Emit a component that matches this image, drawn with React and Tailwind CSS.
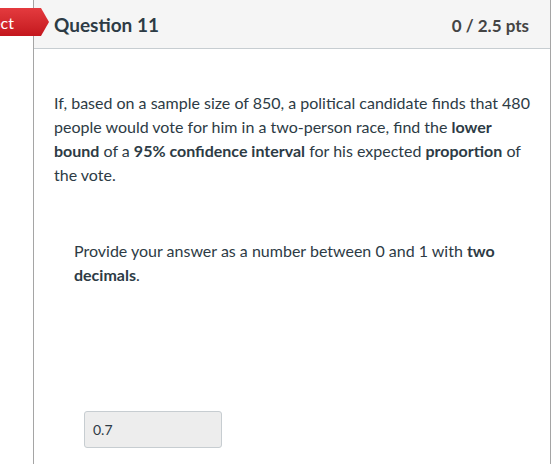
export default function App() {
  return (
    <div className="relative h-[464px] w-[553px] overflow-hidden bg-white font-['Lato','Liberation_Sans',sans-serif] text-[#2d3b45]">
      <div className="ml-[33px] h-full w-[518px] border-x border-[#a5a5a5]">
        <div className="flex h-[49px] items-center justify-between border-b border-[#c7cdd1] bg-[#f5f5f5] pl-[20px] pr-[21px] pt-[3px]">
          <h2 className="text-[19px] font-bold">Question 11</h2>
          <span className="text-[17px] font-bold text-[#444]">0 / 2.5 pts</span>
        </div>
        <div className="pl-[20px] pr-[16px] pt-[42px] text-[16px] leading-[24px]">
          <p>
            If, based on a sample size of 850, a political candidate finds that 480 people would vote for him in a two-person race, find the <strong>lower bound</strong> of a <strong>95% confidence interval</strong> for his expected <strong>proportion</strong> of the vote.
          </p>
          <p className="mt-[52px] pl-[20px]">
            Provide your answer as a number between 0 and 1 with <strong>two decimals</strong>.
          </p>
          <div className="ml-[30px] mt-[124px] flex h-[37px] w-[138px] items-center rounded-[3px] border border-[#c7cdd1] bg-[#ededed] px-[8px] text-[14px]">
            0.7
          </div>
        </div>
      </div>
      <div className="absolute left-0 top-[8px] flex h-[28px] items-center">
        <div className="flex h-full w-[41px] items-center justify-start overflow-hidden bg-gradient-to-b from-[#e43a3e] to-[#c4161d] text-[16px] text-white">
          <span className="-ml-[49px] pt-[1px]">Incorrect</span>
        </div>
        <svg width="8" height="28" viewBox="0 0 8 28">
          <defs>
            <linearGradient id="rg" x1="0" y1="0" x2="0" y2="1">
              <stop offset="0" stopColor="#e43a3e" />
              <stop offset="1" stopColor="#c4161d" />
            </linearGradient>
          </defs>
          <path d="M0 0 L8 14 L0 28 Z" fill="url(#rg)" />
        </svg>
      </div>
    </div>
  )
}
